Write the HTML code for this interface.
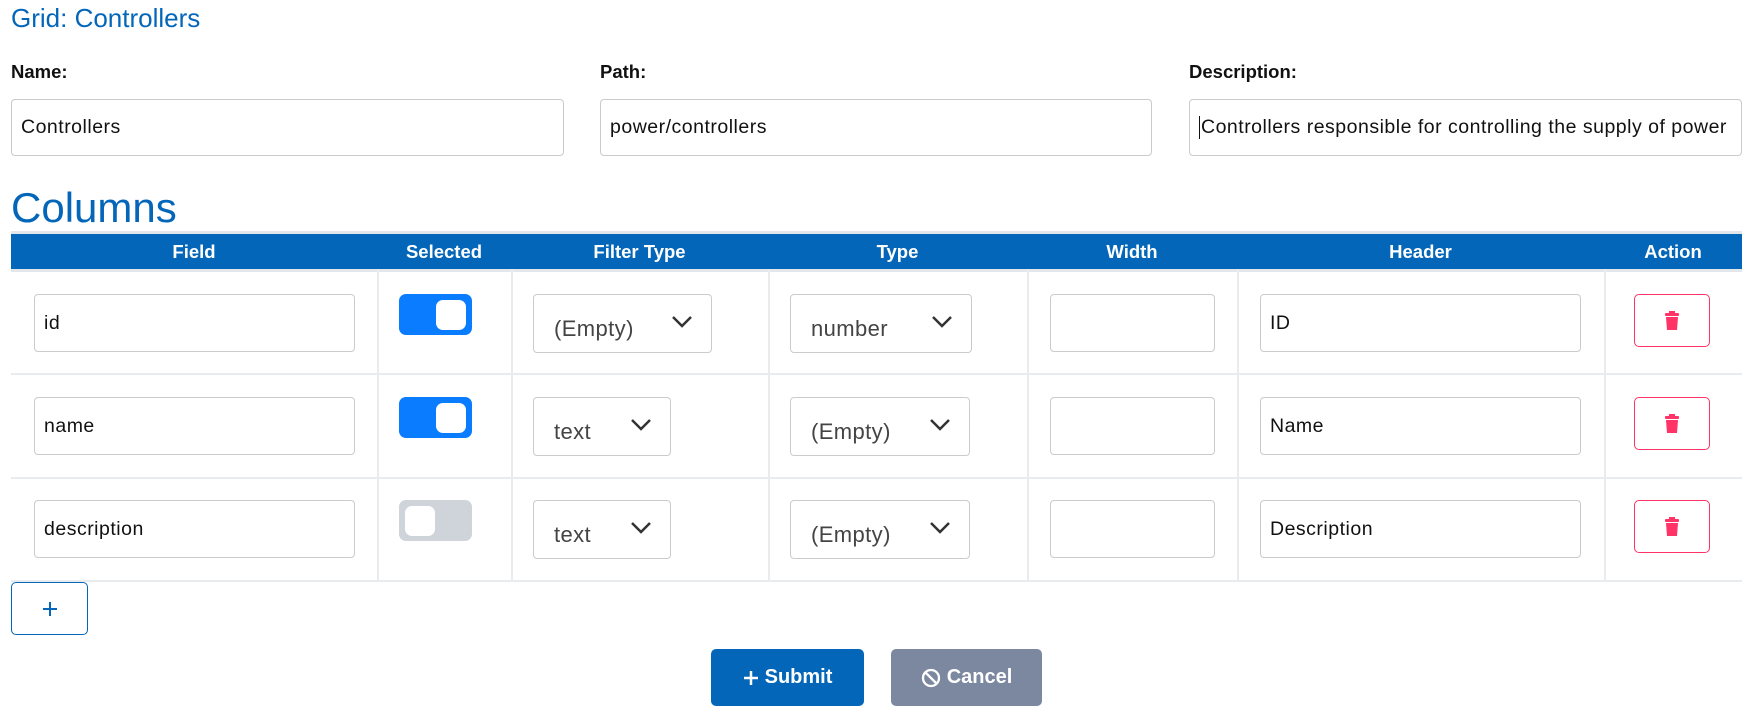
<!DOCTYPE html>
<html><head><meta charset="utf-8"><style>
*{box-sizing:border-box;margin:0;padding:0}
body{width:1751px;height:713px;background:#fff;font-family:"Liberation Sans",sans-serif;position:relative;overflow:hidden;color:#212529}
.a{position:absolute}
.inp{position:absolute;border:1px solid #cbcbcb;border-radius:4px;background:#fff;font-size:19.5px;letter-spacing:0.5px;display:flex;align-items:center;padding-left:9px;padding-right:14px;color:#111;white-space:nowrap;overflow:hidden}
.lbl{position:absolute;font-weight:bold;font-size:18.5px;color:#111}
.th{position:absolute;top:234px;height:35px;color:#fff;font-weight:bold;font-size:18.5px;display:flex;align-items:center;justify-content:center}
.vl{position:absolute;top:269px;height:312px;width:2px;background:#e9ecef}
.hl{position:absolute;left:11px;width:1731px;height:2px;background:#e9ecef}
.tog{position:absolute;width:73px;height:41px;border-radius:7px}
.tog i{position:absolute;top:6px;width:30px;height:30px;background:#fff;border-radius:7px}
.sel{position:absolute;border:1px solid #cbcbcb;border-radius:4px;font-size:22px;letter-spacing:0.4px;color:#444;padding-left:20px;display:flex;align-items:center;padding-top:10px}
.sel svg{position:absolute;right:18px;top:20px}
.del{position:absolute;left:1634px;width:76px;height:53px;border:1.5px solid #ff3366;border-radius:5px;display:flex;align-items:center;justify-content:center}
</style></head><body>
<div class="a" style="left:11px;top:3px;font-size:26px;color:#0466b9">Grid: Controllers</div>
<div class="lbl" style="left:11px;top:61px">Name:</div>
<div class="lbl" style="left:600px;top:61px">Path:</div>
<div class="lbl" style="left:1189px;top:61px">Description:</div>
<div class="inp" style="left:11px;top:99px;width:553px;height:57px">Controllers</div>
<div class="inp" style="left:600px;top:99px;width:552px;height:57px">power/controllers</div>
<div class="inp" style="left:1189px;top:99px;width:553px;height:57px"><span style="border-left:1px solid #111;padding-left:1px">Controllers responsible for controlling the supply of power</span></div>
<div class="a" style="left:11px;top:184px;font-size:42px;color:#0466b9">Columns</div>
<div class="a" style="left:11px;top:231px;width:1731px;height:3px;background:#e3e7ec"></div>
<div class="a" style="left:11px;top:234px;width:1731px;height:35px;background:#0466b9"></div>
<div class="a" style="left:11px;top:269px;width:1731px;height:3px;background:#e3e7ec"></div>
<div class="th" style="left:11px;width:366px">Field</div>
<div class="th" style="left:377px;width:134px">Selected</div>
<div class="th" style="left:511px;width:257px">Filter Type</div>
<div class="th" style="left:768px;width:259px">Type</div>
<div class="th" style="left:1027px;width:210px">Width</div>
<div class="th" style="left:1237px;width:367px">Header</div>
<div class="th" style="left:1604px;width:138px">Action</div>
<div class="vl" style="left:377px"></div><div class="vl" style="left:511px"></div><div class="vl" style="left:768px"></div><div class="vl" style="left:1027px"></div><div class="vl" style="left:1237px"></div><div class="vl" style="left:1604px"></div>
<div class="hl" style="top:373px"></div><div class="hl" style="top:477px"></div><div class="hl" style="top:580px"></div>

<div class="inp" style="left:34px;top:294px;width:321px;height:58px">id</div>
<div class="tog" style="left:399px;top:294px;background:#0a7cff"><i style="right:6px"></i></div>
<div class="sel" style="left:533px;top:294px;width:179px;height:59px">(Empty)<svg width="22" height="14"><polyline points="2,2 11,11 20,2" fill="none" stroke="#333" stroke-width="2.5"/></svg></div>
<div class="sel" style="left:790px;top:294px;width:182px;height:59px">number<svg width="22" height="14"><polyline points="2,2 11,11 20,2" fill="none" stroke="#333" stroke-width="2.5"/></svg></div>
<div class="inp" style="left:1050px;top:294px;width:165px;height:58px"></div>
<div class="inp" style="left:1260px;top:294px;width:321px;height:58px">ID</div>
<div class="del" style="top:294px"><svg width="16" height="20" viewBox="0 0 16 20"><rect x="1" y="2" width="14" height="3" rx="1" fill="#ff3366"/><rect x="5" y="0" width="6" height="3" fill="#ff3366"/><path d="M2 6h12l-1 13H3z" fill="#ff3366"/></svg></div>

<div class="inp" style="left:34px;top:397px;width:321px;height:58px">name</div>
<div class="tog" style="left:399px;top:397px;background:#0a7cff"><i style="right:6px"></i></div>
<div class="sel" style="left:533px;top:397px;width:138px;height:59px">text<svg width="22" height="14"><polyline points="2,2 11,11 20,2" fill="none" stroke="#333" stroke-width="2.5"/></svg></div>
<div class="sel" style="left:790px;top:397px;width:180px;height:59px">(Empty)<svg width="22" height="14"><polyline points="2,2 11,11 20,2" fill="none" stroke="#333" stroke-width="2.5"/></svg></div>
<div class="inp" style="left:1050px;top:397px;width:165px;height:58px"></div>
<div class="inp" style="left:1260px;top:397px;width:321px;height:58px">Name</div>
<div class="del" style="top:397px"><svg width="16" height="20" viewBox="0 0 16 20"><rect x="1" y="2" width="14" height="3" rx="1" fill="#ff3366"/><rect x="5" y="0" width="6" height="3" fill="#ff3366"/><path d="M2 6h12l-1 13H3z" fill="#ff3366"/></svg></div>

<div class="inp" style="left:34px;top:500px;width:321px;height:58px">description</div>
<div class="tog" style="left:399px;top:500px;background:#cfd4db"><i style="left:6px"></i></div>
<div class="sel" style="left:533px;top:500px;width:138px;height:59px">text<svg width="22" height="14"><polyline points="2,2 11,11 20,2" fill="none" stroke="#333" stroke-width="2.5"/></svg></div>
<div class="sel" style="left:790px;top:500px;width:180px;height:59px">(Empty)<svg width="22" height="14"><polyline points="2,2 11,11 20,2" fill="none" stroke="#333" stroke-width="2.5"/></svg></div>
<div class="inp" style="left:1050px;top:500px;width:165px;height:58px"></div>
<div class="inp" style="left:1260px;top:500px;width:321px;height:58px">Description</div>
<div class="del" style="top:500px"><svg width="16" height="20" viewBox="0 0 16 20"><rect x="1" y="2" width="14" height="3" rx="1" fill="#ff3366"/><rect x="5" y="0" width="6" height="3" fill="#ff3366"/><path d="M2 6h12l-1 13H3z" fill="#ff3366"/></svg></div>

<div class="a" style="left:11px;top:582px;width:77px;height:53px;border:1px solid #0466b9;border-radius:5px;display:flex;align-items:center;justify-content:center"><svg width="16" height="16"><path d="M8 1v14M1 8h14" stroke="#0466b9" stroke-width="2"/></svg></div>

<div class="a" style="left:711px;top:649px;width:153px;height:57px;background:#0466b9;border-radius:5px;color:#fff;font-weight:bold;font-size:20px;display:flex;align-items:center;justify-content:center;gap:6px"><svg width="16" height="16"><path d="M8 1v14M1 8h14" stroke="#fff" stroke-width="2.5"/></svg>Submit</div>
<div class="a" style="left:891px;top:649px;width:151px;height:57px;background:#7b889f;border-radius:5px;color:#fff;font-weight:bold;font-size:20px;display:flex;align-items:center;justify-content:center;gap:6px"><svg width="20" height="20"><circle cx="10" cy="10" r="8" fill="none" stroke="#fff" stroke-width="2.3"/><path d="M4.5 4.5l11 11" stroke="#fff" stroke-width="2.3"/></svg>Cancel</div>
</body></html>
